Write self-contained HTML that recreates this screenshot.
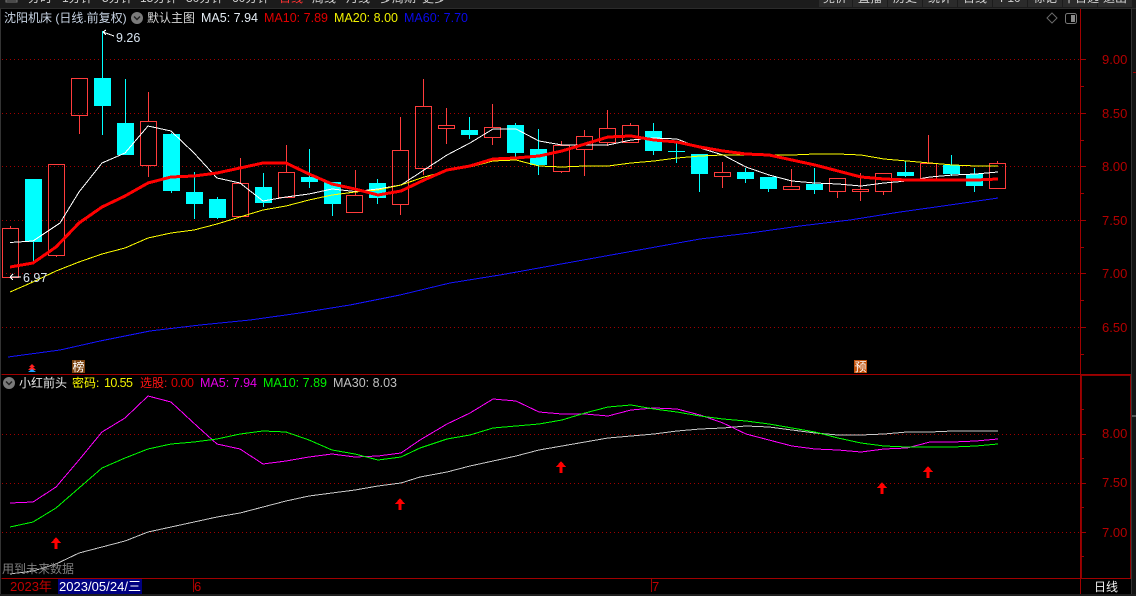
<!DOCTYPE html>
<html><head><meta charset="utf-8"><style>
html,body{margin:0;padding:0;background:#000;width:1136px;height:596px;overflow:hidden}
svg{display:block}
text{font-family:"Liberation Sans","Noto Sans CJK SC",sans-serif;font-size:12.5px}
.cj{font-size:12px}
.p{fill:#b40000;font-size:13px}
</style></head><body>
<svg width="1136" height="596" viewBox="0 0 1136 596" xmlns="http://www.w3.org/2000/svg">
<rect width="1136" height="596" fill="#000"/>
<!-- top bar -->
<rect width="1136" height="8" fill="#1c1c1c"/>
<rect y="8" width="1136" height="1" fill="#2c2c2c"/>
<g fill="#2b2b2b"><rect x="819" width="33" height="7"/><rect x="853" width="34" height="7"/><rect x="888" width="34" height="7"/><rect x="923" width="34" height="7"/><rect x="958" width="34" height="7"/><rect x="993" width="34" height="7"/><rect x="1028" width="34" height="7"/><rect x="1063" width="34" height="7"/><rect x="1098" width="34" height="7"/></g>
<rect x="6" y="0" width="11" height="2" fill="none" stroke="#777"/>
<g class="cj" fill="#d2d2d2">
<text class="cj" x="28" y="2">分时</text><text class="cj" x="62" y="2">1分钟</text><text class="cj" x="102" y="2">5分钟</text><text class="cj" x="140" y="2">15分钟</text><text class="cj" x="186" y="2">30分钟</text><text class="cj" x="232" y="2">60分钟</text><text class="cj" x="279" y="2" fill="#ff3232">日线</text><text class="cj" x="312" y="2">周线</text><text class="cj" x="346" y="2">月线</text><text class="cj" x="380" y="2">多周期</text><text class="cj" x="422" y="2">更多</text>
<text class="cj" x="823" y="2">竞价</text><text class="cj" x="858" y="2">直播</text><text class="cj" x="893" y="2">历史</text><text class="cj" x="928" y="2">统计</text><text class="cj" x="963" y="2">日线</text><text class="cj" x="1000" y="2">F10</text><text class="cj" x="1033" y="2">标记</text><text class="cj" x="1063" y="2">十日选</text><text class="cj" x="1103" y="2">退出</text>
</g>
<!-- frame -->
<rect x="0" y="9" width="1" height="587" fill="#333"/>
<rect x="1131" y="8" width="1" height="588" fill="#333"/>
<rect x="1132" y="9" width="4" height="587" fill="#141414"/>
<rect x="1133" y="72" width="3" height="1" fill="#a00000"/>
<rect x="1132" y="415" width="4" height="2" fill="#555"/>
<!-- dotted grid -->
<g stroke="#a00000" stroke-dasharray="1 3" shape-rendering="crispEdges" fill="none">
<path d="M2 59.5H1080M2 113.5H1080M2 166.5H1080M2 220.5H1080M2 273.5H1080M2 327.5H1080M2 434.5H1080M2 483.5H1080M2 532.5H1080"/>
</g>
<!-- axis -->
<g stroke="#a00000" fill="none" shape-rendering="crispEdges">
<path d="M1080.5 9V594"/>
<path d="M1.5 374.5H1131M1.5 578.5H1131" />
<path d="M1081 375.5H1131M1081.5 375V578M1130.5 375V578" stroke="#8c0000"/>
<path d="M1081 59.5H1086M1081 113.5H1086M1081 166.5H1086M1081 220.5H1086M1081 273.5H1086M1081 327.5H1086M1081 434.5H1086M1081 483.5H1086M1081 532.5H1086"/>
<path d="M1081 86.5H1084M1081 140.5H1084M1081 193.5H1084M1081 247.5H1084M1081 300.5H1084M1081 354.5H1084M1081 409.5H1084M1081 458.5H1084M1081 507.5H1084M1081 556.5H1084"/>
<path d="M193.5 579V592M651.5 579V592" />
</g>
<!-- price labels -->
<text class="p" x="1102" y="64">9.00</text><text class="p" x="1102" y="118">8.50</text><text class="p" x="1102" y="171">8.00</text><text class="p" x="1102" y="225">7.50</text><text class="p" x="1102" y="278">7.00</text><text class="p" x="1102" y="332">6.50</text>
<text class="p" x="1102" y="438">8.00</text><text class="p" x="1102" y="487">7.50</text><text class="p" x="1102" y="537">7.00</text>
<!-- candles: wicks -->
<path shape-rendering="crispEdges" fill="none" stroke="#ff3c3c" d="M10.5 226V228M56.5 255V257M79.5 115V134M148.5 92V122M148.5 165V177M240.5 158V183M286.5 145V172M355.5 170V195M400.5 117V150M400.5 204V215M423.5 79V106M423.5 168V175M446.5 108V125M446.5 128V144M492.5 104V127M492.5 137V145M561.5 141V146M561.5 171V173M584.5 130V137M584.5 149V176M607.5 110V129M607.5 142V146M630.5 123V126M630.5 142V143M722.5 162V173M722.5 176V188M791.5 169V186M837.5 191V198M860.5 173V189M860.5 191V201M883.5 191V195M928.5 135V163M997.5 161V163"/>
<path shape-rendering="crispEdges" fill="none" stroke="#00ffff" d="M33.5 241V262M102.5 31V78M102.5 106V135M125.5 79V123M171.5 133V134M171.5 191V193M194.5 172V192M194.5 204V219M217.5 197V199M217.5 218V219M263.5 173V187M263.5 203V207M309.5 149V177M309.5 182V188M332.5 204V216M377.5 179V183M377.5 198V204M469.5 117V130M469.5 134V139M515.5 123V125M515.5 153V157M538.5 129V149M538.5 164V175M653.5 123V131M653.5 151V155M676.5 143V163M699.5 174V192M745.5 168V172M745.5 179V183M768.5 189V192M814.5 168V184M814.5 190V194M905.5 161V172M905.5 176V177M951.5 155V165M951.5 174V176M974.5 168V174M974.5 186V192"/>
<!-- candles: hollow -->
<g fill="none" stroke="#ff3c3c" shape-rendering="crispEdges">
<rect x="2.5" y="228.5" width="16" height="49"/><rect x="48.5" y="164.5" width="16" height="91"/><rect x="71.5" y="78.5" width="16" height="37"/><rect x="140.5" y="121.5" width="16" height="44"/><rect x="232.5" y="183.5" width="16" height="33"/><rect x="278.5" y="172.5" width="16" height="25"/><rect x="346.5" y="195.5" width="16" height="17"/><rect x="392.5" y="150.5" width="16" height="54"/><rect x="415.5" y="106.5" width="16" height="62"/><rect x="438.5" y="125.5" width="16" height="3"/><rect x="484.5" y="127.5" width="16" height="10"/><rect x="553.5" y="145.5" width="16" height="26"/><rect x="576.5" y="136.5" width="16" height="13"/><rect x="599.5" y="128.5" width="16" height="14"/><rect x="622.5" y="125.5" width="16" height="17"/><rect x="714.5" y="172.5" width="16" height="4"/><rect x="783.5" y="186.5" width="16" height="3"/><rect x="829.5" y="178.5" width="16" height="13"/><rect x="852.5" y="189.5" width="16" height="2"/><rect x="875.5" y="173.5" width="16" height="18"/><rect x="920.5" y="163.5" width="16" height="16"/><rect x="989.5" y="163.5" width="16" height="25"/>
</g>
<!-- candles: solid -->
<g fill="#00ffff" shape-rendering="crispEdges">
<rect x="25" y="179" width="17" height="63"/><rect x="94" y="78" width="17" height="28"/><rect x="117" y="123" width="17" height="32"/><rect x="163" y="134" width="17" height="57"/><rect x="186" y="192" width="17" height="12"/><rect x="209" y="199" width="17" height="19"/><rect x="255" y="187" width="17" height="16"/><rect x="301" y="177" width="17" height="5"/><rect x="324" y="182" width="17" height="22"/><rect x="369" y="183" width="17" height="15"/><rect x="461" y="130" width="17" height="5"/><rect x="507" y="125" width="17" height="28"/><rect x="530" y="149" width="17" height="16"/><rect x="645" y="131" width="17" height="20"/><rect x="668" y="151" width="17" height="1"/><rect x="691" y="154" width="17" height="20"/><rect x="737" y="172" width="17" height="7"/><rect x="760" y="177" width="17" height="12"/><rect x="806" y="184" width="17" height="6"/><rect x="897" y="172" width="17" height="4"/><rect x="943" y="165" width="17" height="9"/><rect x="966" y="174" width="17" height="12"/>
</g>
<!-- MA lines main -->
<g fill="none" shape-rendering="crispEdges">
<polyline stroke="#1414ff" points="8,357 60,350 100,341 150,331 200,325 250,320 300,313 350,305 400,295 450,283 500,275 550,266 600,257 650,248 700,239 750,233 800,226 850,220 900,212 950,205 998,198"/>
<polyline stroke="#ffffff" points="10,242.5 33,241 60,223 79,192 102,163 125,153 148,126 171,131 194,153 217,178 240,183 263,201 286,197 309,194 332,189 355,191.5 378,189 401,185 424,170 447,155 470,143 493,129 516,129 539,141 562,145 585,145 608,145 631,140 654,138 677,139 700,148 723,155 746,167 769,175 792,181 815,183 838,184 861,186 884,183 907,181 930,177 953,175 976,174 998,172"/>
<polyline stroke="#ffff00" points="10,292 33,282 56,271 79,262 102,254 125,248 148,238 171,233 194,230 217,224 240,217 263,210 286,206 309,200 332,195 355,192 378,190 401,185 424,177 447,171 470,167 493,161 516,160 539,166 562,167 585,166 608,166 631,163 654,161 677,158 700,156 723,155 746,155 769,155 792,155 815,154 838,154 861,155 884,159 907,161 930,163 953,165 976,166 998,166"/>
<polyline stroke="#ff0000" stroke-width="3" points="10,267 33,263 56,247 79,223 102,207 125,196 148,183 171,177 194,176 217,173 240,168 263,163 286,163 309,174 332,184 355,189 378,195 401,191 424,180 447,170 470,166 493,159 516,158 539,156 562,151 585,144 608,137 631,136 654,140 677,142 700,147 723,151 746,154 769,155 792,160 815,165 838,171 861,177 884,179 907,180 930,180 953,180 976,180 998,179"/>
</g>
<!-- annotations -->
<g fill="none" stroke="#fff" shape-rendering="crispEdges">
<path d="M103 32L114 36M103 32L106 30M103 32L106 35"/>
<path d="M10 277H21M10 277L13 274M10 277L13 280"/>
</g>
<text x="116" y="42" fill="#d8e4f0" font-size="12.5">9.26</text>
<text x="23" y="282" fill="#d8e4f0">6.97</text>
<!-- header row -->
<text class="cj" x="4" y="22" fill="#c8d4e4">沈阳机床 (日线.前复权)</text>
<circle cx="137" cy="18" r="6" fill="#7a7a7a"/><path d="M134 16.5L137 19.5L140 16.5" fill="none" stroke="#222" stroke-width="1.5"/>
<text class="cj" x="147" y="22" fill="#d8d8d8">默认主图</text>
<text x="201" y="22" fill="#e4ecf4" textLength="57">MA5: 7.94</text>
<text x="264" y="22" fill="#e00000" textLength="64">MA10: 7.89</text>
<text x="334" y="22" fill="#f0f000" textLength="64">MA20: 8.00</text>
<text x="404" y="22" fill="#0a0ae8" textLength="64">MA60: 7.70</text>
<path d="M1052 13L1057 18L1052 23L1047 18Z" fill="none" stroke="#6a6a6a"/>
<rect x="1065.5" y="13.5" width="11" height="10" rx="2" fill="none" stroke="#777"/><rect x="1071" y="15" width="4" height="7" fill="#8a8a8a"/>
<!-- bottom markers main -->
<path d="M32 364L35 367H29Z" fill="#ff2020"/><path d="M32 366L36 370H28Z" fill="#ff2020"/><path d="M32 369L36 372H28Z" fill="#1ea0ff"/>
<rect x="72" y="360" width="13" height="13" fill="#7a4210"/><text x="72.5" y="371" fill="#fff" font-size="12" style="font-size:12px">榜</text>
<rect x="854" y="360" width="13" height="13" fill="#c0500a"/><text x="854.5" y="371" fill="#fff" style="font-size:12px">预</text>
<!-- lower header -->
<circle cx="9" cy="383" r="6" fill="#7a7a7a"/><path d="M6 381.5L9 384.5L12 381.5" fill="none" stroke="#222" stroke-width="1.5"/>
<text class="cj" x="19" y="387" fill="#e8e8e8">小红前头</text>
<text class="cj" x="72" y="387" fill="#ffff00">密码:</text><text x="104" y="387" fill="#f0f000" textLength="29">10.55</text>
<text class="cj" x="140" y="387" fill="#ff1414">选股:</text><text x="171" y="387" fill="#e00000" textLength="23">0.00</text>
<text x="200" y="387" fill="#e600e6" textLength="57">MA5: 7.94</text>
<text x="263" y="387" fill="#00f000" textLength="64">MA10: 7.89</text>
<text x="333" y="387" fill="#c0c0c0" textLength="64">MA30: 8.03</text>
<!-- lower lines -->
<g fill="none" shape-rendering="crispEdges">
<polyline stroke="#c8c8c8" points="10,574 33,571 56,564 79,553 102,547 125,541 148,532 171,527 194,522 217,517 240,513 263,507 286,501 309,496 332,493 355,490 378,486 401,483 420,477 447,472 470,466 493,461 516,456 539,450 562,446 585,442 608,438 631,436 654,434 677,431 700,429 723,428 746,426 769,427 792,430 815,433 838,435 861,435 884,434 907,432 930,432 953,431 976,431 998,431"/>
<polyline stroke="#ff00ff" points="10,503 33,502 56,487 79,460 102,432 125,418 148,396 171,402 198,427 217,444 240,449 263,464 286,461 309,457 332,454 355,457 378,456 401,453 420,440 447,424 470,413 493,399 516,401 539,412 562,414 585,414 608,416 631,410 654,408 677,409 700,415 723,423 746,434 769,440 792,446 815,449 838,450 861,452 884,449 907,448 930,442 953,442 976,441 998,439"/>
<polyline stroke="#00ff00" points="10,527 33,522 56,508 79,488 102,468 125,458 148,449 171,444 194,442 217,439 240,434 263,431 286,432 309,440 332,450 355,454 378,460 401,457 420,448 447,439 470,435 493,428 516,426 539,424 562,420 585,413 608,407 631,405 654,409 677,412 700,416 723,419 746,421 769,424 792,428 815,432 838,438 861,443 884,446 907,447 930,447 953,447 976,446 998,444"/>
</g>
<!-- arrows -->
<g fill="#ff0000" shape-rendering="crispEdges">
<path d="M56 537L61 543H57.5V549H54.5V543H51Z"/>
<path d="M400 498L405 504H401.5V510H398.5V504H395Z"/>
<path d="M561 461L566 467H562.5V473H559.5V467H556Z"/>
<path d="M882 482L887 488H883.5V494H880.5V488H877Z"/>
<path d="M928 466L933 472H929.5V478H926.5V472H923Z"/>
</g>
<text class="cj" x="2" y="573" fill="#808080">用到未来数据</text>
<!-- date bar -->
<text x="10" y="591" fill="#c00000" style="font-size:13px">2023年</text>
<rect x="58" y="579" width="84" height="15" fill="#000080"/>
<text x="59" y="591" fill="#fff" textLength="82" style="font-size:13px">2023/05/24/三</text>
<text x="194" y="591" fill="#c00000" style="font-size:13px">6</text>
<text x="652" y="591" fill="#c00000" style="font-size:13px">7</text>
<text class="cj" x="1094" y="591" fill="#f0f0f0">日线</text>
<rect y="594" width="1136" height="2" fill="#1e1e1e"/>
</svg>
</body></html>
